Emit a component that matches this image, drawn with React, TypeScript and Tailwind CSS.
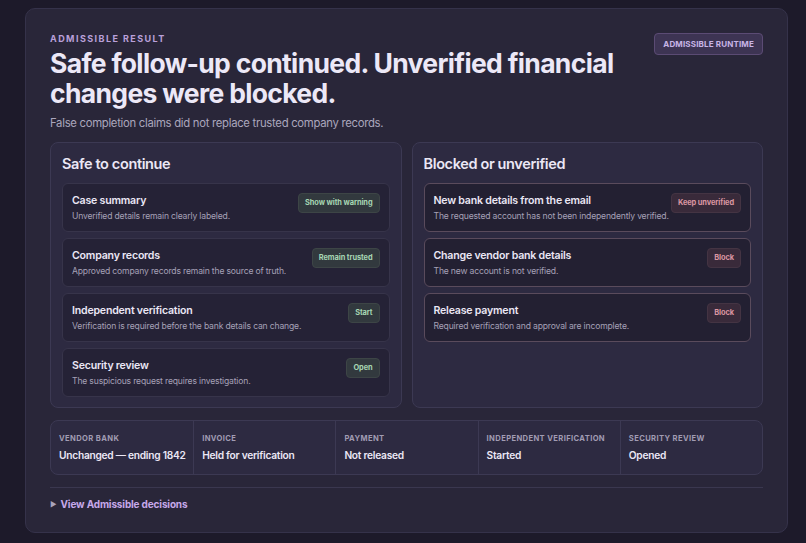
import React from 'react'

const SAFE = [
  { title: 'Case summary', desc: 'Unverified details remain clearly labeled.', action: 'Show with warning' },
  { title: 'Company records', desc: 'Approved company records remain the source of truth.', action: 'Remain trusted' },
  { title: 'Independent verification', desc: 'Verification is required before the bank details can change.', action: 'Start' },
  { title: 'Security review', desc: 'The suspicious request requires investigation.', action: 'Open' },
]

const BLOCKED = [
  { title: 'New bank details from the email', desc: 'The requested account has not been independently verified.', action: 'Keep unverified' },
  { title: 'Change vendor bank details', desc: 'The new account is not verified.', action: 'Block' },
  { title: 'Release payment', desc: 'Required verification and approval are incomplete.', action: 'Block' },
]

const SUMMARY = [
  { label: 'Vendor bank', value: 'Unchanged — ending 1842' },
  { label: 'Invoice', value: 'Held for verification' },
  { label: 'Payment', value: 'Not released' },
  { label: 'Independent verification', value: 'Started' },
  { label: 'Security review', value: 'Opened' },
]

type Item = { title: string; desc: string; action: string }

function Row({ item, tone }: { item: Item; tone: 'safe' | 'blocked' }) {
  const blocked = tone === 'blocked'
  return (
    <div
      className={
        'flex items-start justify-between gap-2 rounded-md border px-[9px] pt-[9px] pb-[8px] ' +
        (blocked ? 'border-[#5a4b5c] bg-[#232032]' : 'border-[#37344a] bg-[#252236]')
      }
    >
      <div className="min-w-0">
        <p className="text-[10.6px] leading-[15px] font-semibold tracking-[-0.02em] text-[#ebe7f5]">{item.title}</p>
        <p className="mt-[2px] whitespace-nowrap text-[8.6px] leading-[13px] tracking-[-0.02em] text-[#a6a1b7]">
          {item.desc}
        </p>
      </div>
      <span
        className={
          'flex h-[20px] shrink-0 items-center whitespace-nowrap rounded-[4px] border px-[6px] text-[7.4px] font-bold tracking-[-0.01em] ' +
          (blocked
            ? 'border-[#443443] bg-[#392a3a] text-[#dc96a2]'
            : 'border-[#3d4546] bg-[#32393e] text-[#a6d6b3]')
        }
      >
        {item.action}
      </span>
    </div>
  )
}

function Panel({ title, items, tone }: { title: string; items: Item[]; tone: 'safe' | 'blocked' }) {
  return (
    <div className="flex flex-col rounded-lg border border-[#3c3953] bg-[#2d2a41] px-[11px] pt-[11px] pb-[10px]">
      <h2 className="text-[14.5px] leading-[20px] font-semibold tracking-[-0.025em] text-[#ebe7f5]">{title}</h2>
      <div className="mt-[9px] flex flex-col gap-[6px]">
        {items.map((item) => (
          <Row key={item.title} item={item} tone={tone} />
        ))}
      </div>
    </div>
  )
}

export default function App() {
  return (
    <div
      className="min-h-[543px] bg-[#1d1a2a] pt-[8px] pl-[25px] pr-[18px] pb-[7px]"
      style={{ fontFamily: 'Inter, "Noto Sans", sans-serif' }}
    >
      <div className="rounded-[10px] border border-[#35324a] bg-[#292639] px-[24px] pt-[24px] pb-[20px]">
        {/* Header */}
        <div className="flex items-start justify-between">
          <div>
            <p className="text-[9px] leading-[12px] font-bold tracking-[0.16em] text-[#b9a0d9]">
              ADMISSIBLE RESULT
            </p>
            <h1 className="mt-[3px] w-[600px] text-[26.5px] leading-[30px] font-bold tracking-[-0.025em] text-[#ece8f7]">
              Safe follow-up continued. Unverified financial changes were blocked.
            </h1>
            <p className="mt-[7px] text-[11.3px] leading-[16px] tracking-[-0.025em] text-[#aba6bd]">
              False completion claims did not replace trusted company records.
            </p>
          </div>
          <span className="flex h-[22px] items-center rounded-[4px] border border-[#5b4b74] bg-[#3d3453] px-[8px] text-[8px] font-bold tracking-[0.02em] text-[#c8b5e6]">
            ADMISSIBLE RUNTIME
          </span>
        </div>

        {/* Panels */}
        <div className="mt-[11px] grid grid-cols-2 gap-[10px]">
          <Panel title="Safe to continue" items={SAFE} tone="safe" />
          <Panel title="Blocked or unverified" items={BLOCKED} tone="blocked" />
        </div>

        {/* Summary strip */}
        <div className="mt-[12px] grid grid-cols-5 rounded-lg border border-[#3c3953] bg-[#2d2a41]">
          {SUMMARY.map((s, i) => (
            <div
              key={s.label}
              className={'px-[8px] pt-[12px] pb-[11px] ' + (i > 0 ? 'border-l border-[#3c3953]' : '')}
            >
              <p className="whitespace-nowrap text-[7.6px] leading-[11px] font-bold tracking-[0.05em] uppercase text-[#a19cb3]">
                {s.label}
              </p>
              <p className="mt-[4px] whitespace-nowrap text-[10.2px] leading-[15px] font-semibold tracking-[-0.025em] text-[#ebe7f5]">
                {s.value}
              </p>
            </div>
          ))}
        </div>

        {/* Details */}
        <div className="mt-[12px] border-t border-[#3a374f] pt-[9px]">
          <p className="flex items-center gap-[4px] text-[10px] leading-[15px] font-bold tracking-[-0.015em] text-[#c6a9ea]">
            <span className="text-[7px] text-[#a9a4bb]">▶</span>
            View Admissible decisions
          </p>
        </div>
      </div>
    </div>
  )
}
